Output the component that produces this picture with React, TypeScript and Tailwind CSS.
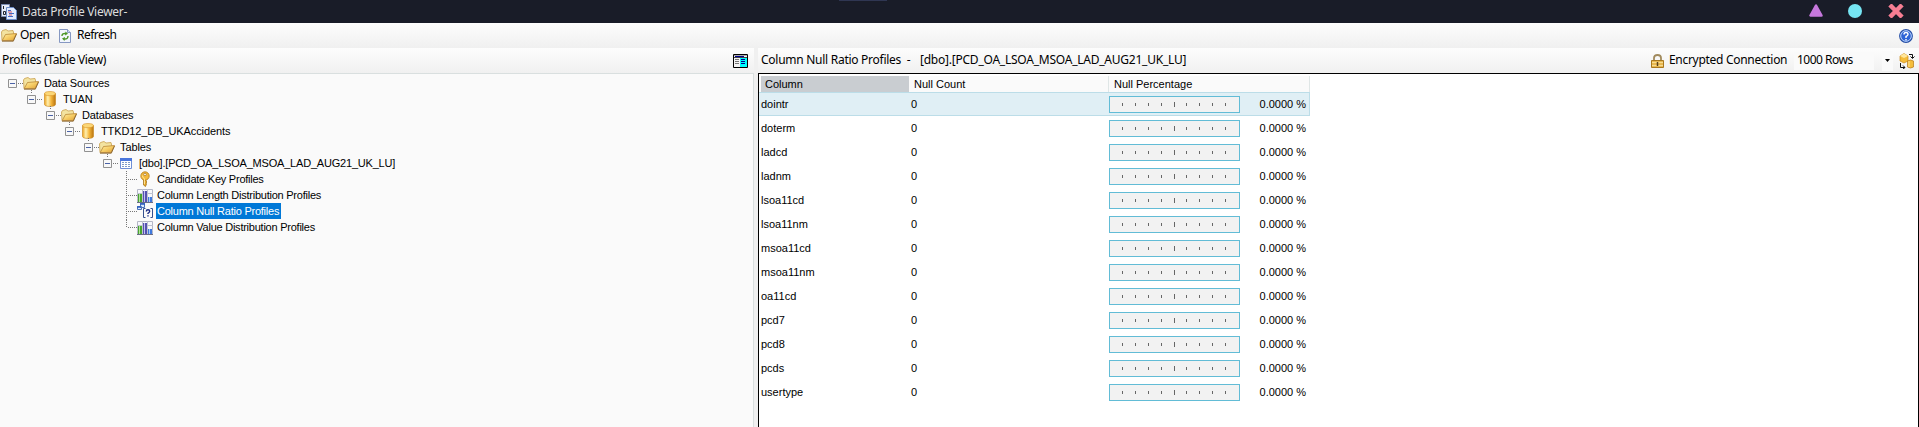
import React from "react";

const seg = "font-['Noto_Sans','Open_Sans',sans-serif]";

function Folder() {
  return (
    <svg width="16" height="13" viewBox="0 0 16 13" className="shrink-0">
      <defs>
        <linearGradient id="fold" x1="0" y1="0" x2="1" y2="1">
          <stop offset="0" stopColor="#fdf0a8" />
          <stop offset="0.5" stopColor="#f6cd66" />
          <stop offset="1" stopColor="#dd9f35" />
        </linearGradient>
      </defs>
      <path d="M1 11.500 .5 3l1-1.500 3.500-1L7 2l5-.5 1 4" fill="#f3e3a0" stroke="#c9a04c" strokeWidth="0.8" />
      <path d="M1.200 11.500 4.500 5.500l11-1-3.300 7z" fill="url(#fold)" stroke="#b07a28" strokeWidth="0.7" />
      <path d="M1 12.200h11.300L15.500 5" fill="none" stroke="#8a6328" strokeWidth="0.9" />
    </svg>
  );
}

function Database() {
  return (
    <svg width="12" height="16" viewBox="0 0 12 16" className="shrink-0">
      <defs>
        <linearGradient id="db" x1="0" x2="1">
          <stop offset="0" stopColor="#eda21c" />
          <stop offset="0.3" stopColor="#fff0b0" />
          <stop offset="0.6" stopColor="#f6b73c" />
          <stop offset="1" stopColor="#b87410" />
        </linearGradient>
      </defs>
      <path d="M.5 2.500v11c0 2.600 11 2.600 11 0v-11z" fill="url(#db)" stroke="#c88418" strokeWidth="0.6" />
      <ellipse cx="6" cy="2.600" rx="5.400" ry="2.100" fill="#fbd777" stroke="#d9942a" strokeWidth="0.6" />
    </svg>
  );
}

function TableIcon() {
  return (
    <svg width="12" height="11" viewBox="0 0 12 11" className="shrink-0">
      <path d="M.5.5h11v10H.5z" fill="#fff" stroke="#6f8fd6" />
      <path d="M0 0h12v3H0z" fill="#4a76dc" />
      <path d="M2 4.500h2M5 4.500h2M8 4.500h2M2 6.500h2M5 6.500h2M8 6.500h2M2 8.500h2M5 8.500h2M8 8.500h2" stroke="#7f9cc8" />
    </svg>
  );
}

function KeyIcon() {
  return (
    <svg width="16" height="16" viewBox="0 0 16 16" className="shrink-0">
      <path d="M6.500 8h2.500v2l1 1-1 1 .5 1-1 2.500L6.500 14z" fill="#e7a927" stroke="#9d6a13" strokeWidth="0.7" />
      <circle cx="8" cy="5" r="4.200" fill="#f4b93c" stroke="#b27a18" strokeWidth="0.8" />
      <circle cx="8" cy="3.500" r="1.200" fill="#fff" stroke="#95620f" strokeWidth="0.6" />
      <path d="M5.300 4.500q.3 2.500 2.200 3.200v5.500" fill="none" stroke="#ffe9a0" strokeWidth="0.9" />
    </svg>
  );
}

function ChartIcon() {
  return (
    <svg width="16" height="14" viewBox="0 0 16 14" className="mt-[2px] shrink-0">
      <path d="M.5.5h15v13H.5z" fill="#f7f8fc" stroke="#b4b7c6" />
      <path d="M5.500 0v13M10.500 0v13M0 4.500h16M0 9.500h16" stroke="#bfc2d0" />
      <path d="M1 5h4v8H1z" fill="#4aa52f" />
      <path d="M2 5h1v8H2z" fill="#b2e39d" />
      <path d="M6 2h4v11H6z" fill="#5552b0" />
      <path d="M7 2h1v11H7z" fill="#c4c1f2" />
      <path d="M11 8h4v5h-4z" fill="#3f79dd" />
      <path d="M12 8h1v5h-1z" fill="#a9cbfa" />
      <path d="M0 13.500h16" stroke="#6a6e86" />
    </svg>
  );
}

function NullIcon() {
  return (
    <svg width="16" height="16" viewBox="0 0 16 16" className="shrink-0">
      <path d="M3.500.5h4v4h-4zM.5 3.500h4v3h-4z" fill="#dceafb" stroke="#4c72ba" />
      <path d="M3 1h5M0 4h4" stroke="#2d5cc0" strokeWidth="1.500" />
      <path d="M8.500 5.500h-2v9h2M13.500 5.500h2v9h-2" fill="none" stroke="#35518f" />
      <path d="M9.300 8.500q0-1.700 1.700-1.700t1.700 1.500q0 1-1.700 2V11M11 12.200v1.400" fill="none" stroke="#1c2d86" strokeWidth="1.400" />
    </svg>
  );
}

function AppIcon() {
  return (
    <svg width="16" height="16" viewBox="0 0 16 16" className="shrink-0">
      <path d="M.5.500h8v12h-8z" fill="#e8edf8" stroke="#7c8db4" />
      <path d="M2.500 2v3M2.500 7.500h2v3h-2z" stroke="#20242f" fill="none" />
      <path d="M5.500 3.500h7l3 3v9h-10z" fill="#e2ebfc" stroke="#6d8cc8" />
      <path d="M7 6.500h3M8 9.500h5M7 12.500h5" stroke="#4068c4" />
      <path d="M7 8h4M8 11h3" stroke="#d05462" />
    </svg>
  );
}

function RefreshIcon() {
  return (
    <svg width="12" height="14" viewBox="0 0 12 14" className="shrink-0">
      <path d="M.5.500h8l3 3v10H.5z" fill="#f2f6fd" stroke="#8698c2" />
      <path d="M8.500.5v3h3" fill="#cfdaf0" stroke="#8698c2" />
      <path d="M3 7q0-3 4-2.500M9 7q0 3.500-4 3" fill="none" stroke="#4b9626" strokeWidth="1.400" />
      <path d="M6.500 2.500 9 4.800 6 6.500zM5.500 12 3 9.500 6 8z" fill="#4b9626" />
    </svg>
  );
}

function Expander() {
  return (
    <svg width="9" height="9" viewBox="0 0 9 9" className="shrink-0">
      <path d="M.5.500h8v8h-8z" fill="#f8f8f8" stroke="#919191" />
      <path d="M2 4.500h5" stroke="#4b63a7" />
    </svg>
  );
}

const branches = [
  { text: "Data Sources", indent: "pl-[8px]", icon: "folder", track: "tracking-[-0.1px]" },
  { text: "TUAN", indent: "pl-[27px]", icon: "db", track: "tracking-[-0.1px]" },
  { text: "Databases", indent: "pl-[46px]", icon: "folder", track: "tracking-[-0.15px]" },
  { text: "TTKD12_DB_UKAccidents", indent: "pl-[65px]", icon: "db", track: "tracking-[-0.1px]" },
  { text: "Tables", indent: "pl-[84px]", icon: "folder", track: "tracking-[-0.1px]" },
  { text: "[dbo].[PCD_OA_LSOA_MSOA_LAD_AUG21_UK_LU]", indent: "pl-[103px]", icon: "table", track: "tracking-[-0.2px]" },
];

const leaves = [
  { text: "Candidate Key Profiles", icon: <KeyIcon /> },
  { text: "Column Length Distribution Profiles", icon: <ChartIcon /> },
  { text: "Column Null Ratio Profiles", icon: <NullIcon />, selected: true },
  { text: "Column Value Distribution Profiles", icon: <ChartIcon /> },
];

function Tree() {
  return (
    <div className="relative pt-px font-['Liberation_Sans',sans-serif] text-[11px] leading-4 text-black">
      <svg className="absolute left-0 top-0" width="160" height="180" fill="none" stroke="#777" strokeDasharray="1 1">
        <path d="M31.500 16v4M50.500 32v4M69.500 48v4M88.500 64v4M107.500 80v4M126.500 97v49M128 105.500h9M128 121.500h9M128 137.500h9M128 153.500h9M126.500 146v8" />
      </svg>
      {branches.map((b) => (
        <div key={b.text} className={`flex h-4 items-center ${b.indent}`}>
          <Expander />
          <svg width="6" height="1" className="shrink-0">
            <path d="M1 .5h5" stroke="#777" strokeDasharray="1 1" />
          </svg>
          <div className="flex w-[21px] shrink-0 items-center">
            {b.icon === "folder" ? <Folder /> : b.icon === "db" ? <div className="pl-[2px]"><Database /></div> : <div className="pl-[2px]"><TableIcon /></div>}
          </div>
          <span className={`whitespace-nowrap ${b.track}`}>{b.text}</span>
        </div>
      ))}
      {leaves.map((l) => (
        <div key={l.text} className="flex h-4 items-center pl-[137px]">
          <div className="flex w-[19px] items-center">{l.icon}</div>
          <span className={`h-4 whitespace-nowrap pl-[1px] pr-[2px] tracking-[-0.24px] ${l.selected ? "bg-[#0078d7] text-white" : ""}`}>{l.text}</span>
        </div>
      ))}
    </div>
  );
}

const columns = ["dointr", "doterm", "ladcd", "ladnm", "lsoa11cd", "lsoa11nm", "msoa11cd", "msoa11nm", "oa11cd", "pcd7", "pcd8", "pcds", "usertype"];

function Gauge() {
  return (
    <div className="h-[17px] w-[131px] border border-[#62bcd6] bg-[#f2f2f2]">
      <svg width="129" height="15" stroke="#666" className="block">
        <path d="M12.500 6v3M25.500 6v3M38.500 6v3M51.500 6v3M64.500 5v5M76.500 6v3M89.500 6v3M102.500 6v3M115.500 6v3" />
      </svg>
    </div>
  );
}

function Grid() {
  return (
    <div className="h-full border-x border-t border-black bg-white pt-[2px] font-['Liberation_Sans',sans-serif] text-[11px] text-black">
      <div className="flex h-4 w-[551px] border-r border-[#dfe6e6] bg-[#fafafa] pl-[2px] leading-4">
        <div className="w-[148px] bg-[#c9cdd1] pl-1">Column</div>
        <div className="w-[200px] border-r border-[#dfe6e6] pl-[5px]">Null Count</div>
        <div className="pl-[5px]">Null Percentage</div>
      </div>
      {columns.map((c, i) => (
        <div key={c} className={`flex h-6 w-[551px] items-center border-y border-r ${i === 0 ? "border-[#bcdde8] bg-[#e0eff5]" : "border-transparent"}`}>
          <div className="w-[151px] pl-[2px]">{c}</div>
          <div className="w-[199px] pl-px">0</div>
          <Gauge />
          <div className="flex-1 pr-[3px] text-right">0.0000 %</div>
        </div>
      ))}
    </div>
  );
}

export default function App() {
  return (
    <div className={`flex h-[427px] w-[1919px] flex-col overflow-hidden bg-[#f0f0f0] text-black ${seg}`}>
      <header className="relative flex h-[23px] shrink-0 items-center bg-[#191c28] pl-[1px] text-[12px] text-[#ddd]">
        <div className="absolute left-[839px] top-0 h-px w-12 bg-[#2f3652]" />
        <AppIcon />
        <span className="pl-[5px] tracking-[-0.3px]">Data Profile Viewer-</span>
        <div className="ml-auto flex h-[22px] items-center pb-[2px] pr-[15px]">
          <svg width="14" height="13" viewBox="0 0 14 13"><path d="M7 1.500 1.500 11.500h11z" fill="#c678dd" stroke="#c678dd" strokeWidth="2.500" strokeLinejoin="round" /></svg>
          <svg className="ml-[25px]" width="14" height="14" viewBox="0 0 14 14"><circle cx="7" cy="7" r="7" fill="#76e5f3" /></svg>
          <svg className="ml-[26px]" width="16" height="14" viewBox="0 0 16 14"><path d="m3.500 2.500 9 9M12.500 2.500l-9 9" stroke="#f67e93" strokeWidth="4.500" strokeLinecap="square" /></svg>
        </div>
      </header>
      <div className="flex h-[25px] shrink-0 items-center bg-linear-to-b from-[#fdfdfd] to-[#f0f0f0] pl-[1px] text-[12px]">
        <Folder />
        <span className="w-[42px] pb-[2px] pl-[3px] tracking-[-0.3px]">Open</span>
        <RefreshIcon />
        <span className="pb-[2px] pl-[6px] tracking-[-0.5px]">Refresh</span>
        <svg className="ml-auto mr-[6px]" width="14" height="14" viewBox="0 0 14 14">
          <circle cx="7" cy="7" r="6.300" fill="#2c63d6" stroke="#2850a5" strokeWidth="1.200" />
          <circle cx="7" cy="7" r="5.300" fill="none" stroke="#bcd4fb" />
          <path d="M5 5.500q0-2 2-2t2 2q0 1-2 2V9M7 10v1.500" fill="none" stroke="#fff" strokeWidth="1.400" />
        </svg>
      </div>
      <div className="flex min-h-0 flex-1">
        <section className="flex w-[754px] shrink-0 flex-col">
          <div className="flex h-[25px] shrink-0 items-center bg-linear-to-b from-[#fdfdfd] to-[#f0f0f0] pl-[2px] pr-[6px] text-[12px]">
            <span className="pb-[2px] tracking-[-0.35px]">Profiles (Table View)</span>
            <svg className="ml-auto" width="15" height="14" viewBox="0 0 15 14">
              <path d="M.5.500h14v13H.5z" fill="#f4f4f4" stroke="#000" />
              <path d="M1 1h13v1H1z" fill="#aaa" />
              <path d="M2 2.500h9" stroke="#00008b" />
              <path d="M1 3.500h13" stroke="#444" />
              <path d="M7 4h7v9H7z" fill="#0ff" />
              <path d="M2 5.500h4M2 7.500h4M2 9.500h4" stroke="#777" />
              <path d="M8 5.500h4M8 7.500h4M8 9.500h4" stroke="#00008b" />
            </svg>
          </div>
          <div className="flex-1 border-r border-t border-[#d9dfdf] bg-[#fafafa]"><Tree /></div>
        </section>
        <section className="ml-1 flex min-w-0 flex-1 flex-col">
          <div className="flex h-[25px] shrink-0 items-center whitespace-nowrap bg-linear-to-b from-[#fdfdfd] to-[#f0f0f0] pl-[3px] pr-[4px] text-[12px]">
            <span className="w-[159px] whitespace-pre pb-[2px] tracking-[-0.27px]">Column Null Ratio Profiles  -</span>
            <span className="pb-[2px] tracking-[-0.23px]">[dbo].[PCD_OA_LSOA_MSOA_LAD_AUG21_UK_LU]</span>
            <svg className="ml-auto shrink-0" width="13" height="14" viewBox="0 0 13 14">
              <path d="M3 7V4q0-3 3.500-3T10 4v3" fill="none" stroke="#a18a5d" strokeWidth="1.800" />
              <path d="M.5 6.500h12v7H.5z" fill="#e8b850" stroke="#a87820" />
              <path d="M1 8.500h11M1 11.500h11" stroke="#f8dc92" />
              <path d="M6.500 8v4" stroke="#5d421a" strokeWidth="1.500" />
            </svg>
            <span className="w-[130px] shrink-0 pb-[2px] pl-[5px] tracking-[-0.3px]">Encrypted Connection</span>
            <div className="flex h-[18px] w-[80px] items-center bg-[#fafafa] pb-[2px] pl-[3px] tracking-[-0.5px]">1000 Rows</div>
            <div className="ml-2 flex h-5 w-[11px] items-center justify-center bg-[#fafafa]">
              <svg width="5" height="3"><path d="M0 0h5L2.500 3z" /></svg>
            </div>
            <svg className="ml-[6px] shrink-0" width="16" height="16" viewBox="0 0 16 16">
              <path d="M1 3 5 .5l4 2.500v5l-4 2-4-2z" fill="#f5bd3b" stroke="#c98a1c" strokeWidth="0.700" />
              <path d="m1 3 4 2 4-2-4-2.500z" fill="#ffe69b" />
              <path d="M8.500 8q3-2 6 0v6q-3 2-6 0z" fill="#f5bd3b" stroke="#b67915" strokeWidth="0.700" />
              <path d="M10 8v6" stroke="#ffe69b" />
              <path d="M10 1.500h3.500V5M11.500 3.500l2 2 2-2M1.500 10v4.500H6M4 12.500l2 2-2 1.500" fill="none" stroke="#111" />
            </svg>
          </div>
          <div className="min-h-0 flex-1"><Grid /></div>
        </section>
      </div>
    </div>
  );
}
